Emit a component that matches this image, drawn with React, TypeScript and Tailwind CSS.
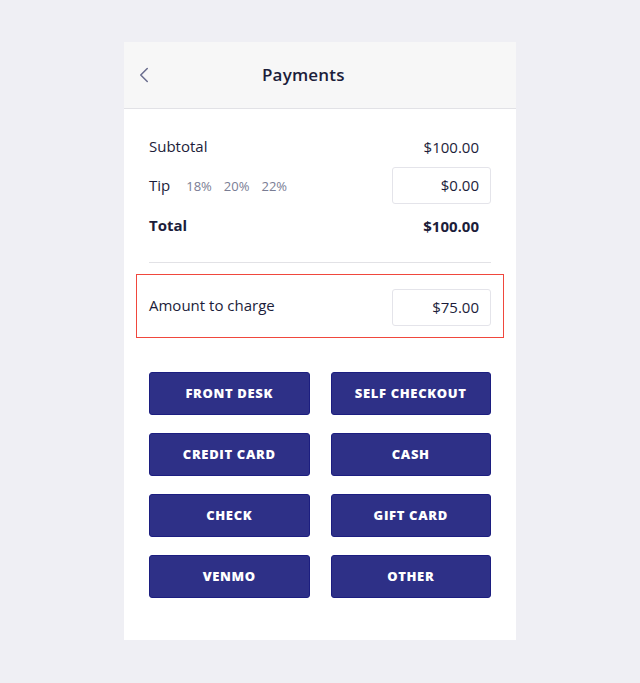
import { ChevronLeft } from "lucide-react";

const METHODS = [
  "FRONT DESK", "SELF CHECKOUT",
  "CREDIT CARD", "CASH",
  "CHECK", "GIFT CARD",
  "VENMO", "OTHER",
];

export default function App() {
  return (
    <div className="min-h-[683px] bg-[#efeff4] pt-[42px] font-['Open_Sans',sans-serif] text-[#1c1d3a]">
      <div className="mx-auto w-[392px] h-[598px] bg-white">
        {/* Header */}
        <div className="h-[67px] bg-[#f7f7f7] border-b border-[#e2e2e6] flex items-center">
          <ChevronLeft className="w-[26px] h-[26px] ml-[7px] text-[#6b6e8f]" strokeWidth={1.4} />
          <div className="ml-[105px] text-[17px] font-semibold tracking-[0.01em]">Payments</div>
        </div>

        {/* Totals */}
        <div className="px-[25px] pt-[24px]">
          <div className="flex items-center justify-between h-[26px]">
            <span className="text-[15px]">Subtotal</span>
            <span className="text-[15px] mr-[12px] mt-[2px]">$100.00</span>
          </div>
          <div className="flex items-center justify-between mt-[8px]">
            <div className="flex items-baseline">
              <span className="text-[15px]">Tip</span>
              <span className="text-[13px] text-[#7a7d94] ml-[16px]">18%</span>
              <span className="text-[13px] text-[#7a7d94] ml-[12px]">20%</span>
              <span className="text-[13px] text-[#7a7d94] ml-[12px]">22%</span>
            </div>
            <div className="w-[99px] h-[37px] border border-[#e4e4ea] rounded-[3px] flex items-center justify-end pr-[11px] text-[15px]">
              $0.00
            </div>
          </div>
          <div className="flex items-center justify-between mt-[3px] h-[36px]">
            <span className="text-[15px] font-bold">Total</span>
            <span className="text-[15px] font-bold mr-[12px] mt-[2px]">$100.00</span>
          </div>
          <div className="mt-[19px] border-t border-[#e2e2e6]" />
        </div>

        {/* Amount to charge */}
        <div className="mx-[12px] mt-[11px] h-[64px] border border-[#f0473d] flex items-center justify-between pl-[12px] pr-[12px]">
          <span className="text-[15px] -mt-[2px]">Amount to charge</span>
          <div className="w-[99px] h-[37px] border border-[#e4e4ea] rounded-[3px] flex items-center justify-end pr-[11px] text-[15px] mt-[2px]">
            $75.00
          </div>
        </div>

        {/* Payment methods */}
        <div className="grid grid-cols-2 gap-x-[21px] gap-y-[18px] px-[25px] mt-[34px]">
          {METHODS.map((m) => (
            <button
              key={m}
              className="h-[43px] bg-[#2e3087] border border-[#1c1e80] rounded-[3px] text-white text-[13px] font-extrabold tracking-[0.05em]"
            >
              {m}
            </button>
          ))}
        </div>
      </div>
    </div>
  );
}
